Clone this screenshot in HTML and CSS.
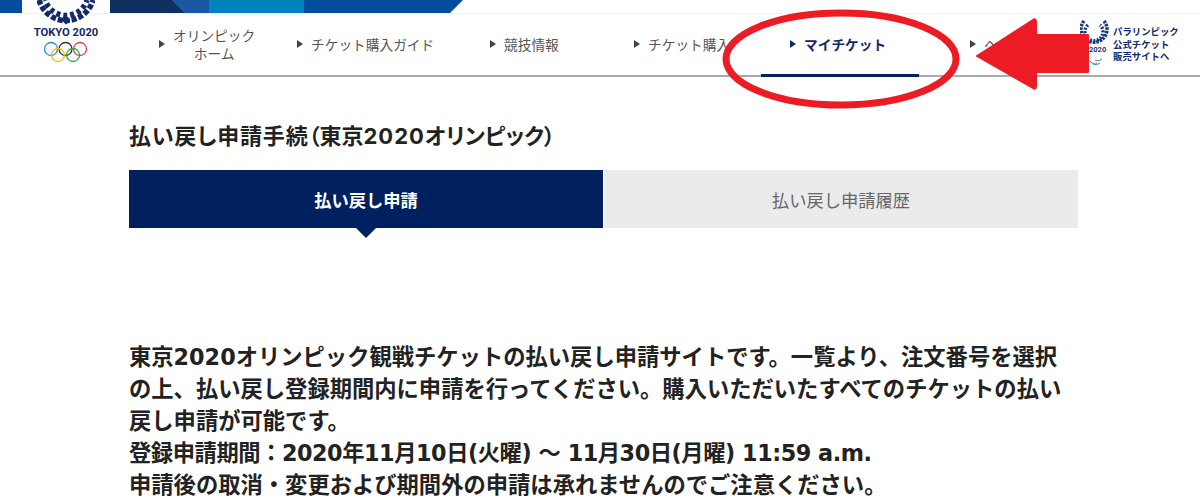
FILE: index.html
```html
<!DOCTYPE html>
<html lang="ja">
<head>
    <title>払い戻し申請手続</title>
    <meta name="viewport" content="width=device-width, initial-scale=1">
    <link rel="stylesheet" href="styles.css">
</head>
<body>
    <!-- Header -->
    <header class="header">
        <div class="topbar">
            <div class="stripe-left"></div>
            <div class="logo-gap"></div>
            <svg class="stripe-art" viewBox="0 0 353 13" preserveAspectRatio="none">
                <rect width="353" height="13" fill="#004d9d"/>
                <rect width="194" height="13" fill="#0082bf"/>
                <polygon points="0,0 62,0 75,13 0,13" fill="#103060"/>
                <polygon points="62,0 99,0 99,13 75,13" fill="#1a58a3"/>
                <polygon points="353,0 353,13 340,13" fill="#fff"/>
            </svg>
        </div>
        <nav class="nav">
            <div class="nav-logo">
                <svg class="emblem" width="58" height="25" viewBox="0 0 58 25">
                    <g fill="none" stroke="#12296b">
                        <path d="M2 0 A28 28 0 0 0 56 0" stroke-width="5.5" stroke-dasharray="5 2"/>
                        <path d="M8 0 A22 22 0 0 0 50 0" stroke-width="5.5" stroke-dasharray="4 3" stroke-dashoffset="3"/>
                    </g>
                    <path d="M24.5 20 L29 15.5 L33.5 20 L29 24.5Z" fill="#12296b"/>
                </svg>
                <div class="logo-text">TOKYO 2020</div>
                <svg class="rings" width="46" height="22" viewBox="0 0 46 22" fill="none" stroke-width="1.3">
                    <circle cx="8" cy="8" r="6.5" stroke="#2b8fd8"/>
                    <circle cx="22.5" cy="8" r="6.5" stroke="#3a2e2a"/>
                    <circle cx="37" cy="8" r="6.5" stroke="#e0405a"/>
                    <circle cx="15" cy="14" r="6.5" stroke="#f5b921"/>
                    <circle cx="30" cy="14" r="6.5" stroke="#2fa552"/>
                </svg>
            </div>
            <ul class="nav-list">
                <li class="nav-item item-home"><span class="arrow"></span><span class="center">オリンピック<br>ホーム</span></li>
                <li class="nav-item item-guide"><span class="arrow"></span><span>チケット購入ガイド</span></li>
                <li class="nav-item item-sport"><span class="arrow"></span><span>競技情報</span></li>
                <li class="nav-item item-buy"><span class="arrow"></span><span>チケット購入</span></li>
                <li class="nav-item item-my active"><span class="arrow"></span><span>マイチケット</span></li>
                <li class="nav-item item-more"><span class="arrow"></span><span>ヘルプ</span></li>
            </ul>
            <div class="para-link">
                <svg class="para-mark" width="30" height="50" viewBox="0 0 30 50">
                    <path d="M4 1 A13 13 0 1 0 24 1" fill="none" stroke="#16387e" stroke-width="3.5" stroke-dasharray="2.5 1"/>
                    <path d="M8 5 A9 9 0 1 0 20 5" fill="none" stroke="#16387e" stroke-width="3.5" stroke-dasharray="2 1.5"/>
                    <text class="para-year" x="9" y="32">2020</text>
                    <path d="M10 41 q4 5 7 2" stroke="#d8433c" fill="none"/>
                    <path d="M13 44 q4 2 7-1" stroke="#2d8fd0" fill="none"/>
                    <path d="M15 40 q4 2 7-1" stroke="#2fa552" fill="none"/>
                </svg>
                <div class="para-text">パラリンピック<br>公式チケット<br>販売サイトへ</div>
            </div>
        </nav>
    </header>

    <!-- Annotations on top of the screenshot -->
    <svg class="marks" width="1200" height="115" viewBox="0 0 1200 115">
        <ellipse cx="841" cy="59" rx="115" ry="46" fill="none" stroke="#ed1c24" stroke-width="7"/>
        <path d="M977 56 L1033 20 Q1036 18 1036 22 V35 H1088 V72 H1036 V86 Q1036 90 1033 88Z" fill="#ed1c24" stroke="#ed1c24" stroke-width="2" stroke-linejoin="round"/>
    </svg>

    <main class="main">
        <h1 class="title"><span class="title-head">払い戻し申請手続</span>（東京<span class="num">2020</span>オリンピック）</h1>
        <div class="tabs">
            <div class="tab tab-on">払い戻し申請</div>
            <div class="tab tab-off">払い戻し申請履歴</div>
        </div>
        <p class="lead">
            東京2020オリンピック観戦チケットの払い戻し申請サイトです。一覧より、注文番号を選択の上、払い戻し登録期間内に申請を行ってください。購入いただいたすべてのチケットの払い戻し申請が可能です。<br>
            <span class="period">登録申請期間：2020年11月10日(火曜) ～ 11月30日(月曜) 11:59 a.m.</span><br>
            申請後の取消・変更および期間外の申請は承れませんのでご注意ください。
        </p>
    </main>
</body>
</html>
```

FILE: styles.css
```css
* { box-sizing: border-box; }
html, body { margin: 0; padding: 0; }
body { font-family: "Noto Sans CJK JP", "Noto Sans", sans-serif; background: #fff; color: #222; overflow: hidden; height: 503px; }

.header { height: 77px; border-bottom: 2px solid #aaa; }
.topbar { display: flex; height: 13px; }
.stripe-left { width: 22px; background: #004d9d; }
.logo-gap { width: 88px; }
.stripe-art { width: 353px; height: 13px; display: block; }

.nav { display: flex; height: 62px; border-top: 1px solid #f2f2f2; }
.nav-logo { width: 132px; display: flex; flex-direction: column; align-items: center; margin-top: -14px; }
.emblem { display: block; }
.logo-text { font-family: "Roboto", sans-serif; font-size: 11.2px; font-weight: 700; color: #12296b; line-height: 13px; margin-top: 1px; white-space: nowrap; }
.rings { margin-top: 2px; }

.nav-list { list-style: none; display: flex; margin: 0; padding: 0; flex: 1; }
.nav-item { display: flex; align-items: center; font-size: 13.7px; line-height: 18px; color: #555; height: 61px; padding-bottom: 2px; white-space: nowrap; }
.arrow { width: 0; height: 0; border-left: 6px solid #444; border-top: 4.5px solid transparent; border-bottom: 4.5px solid transparent; margin-right: 8px; }
.center { text-align: center; }
.item-home { width: 138px; padding-left: 27px; }
.item-guide { width: 193px; padding-left: 27px; }
.item-sport { width: 144px; padding-left: 27px; }
.item-buy { width: 154px; padding-left: 27px; }
.item-my { width: 158px; padding-left: 29px; }
.item-more { width: 161px; padding-left: 51px; }
.active { font-weight: 700; color: #12296b; border-bottom: 3px solid #00205f; height: 63px; padding-bottom: 0; }
.active .arrow { border-left-color: #12296b; }

.para-link { display: flex; width: 120px; }
.para-mark { margin-top: 6px; flex: none; }
.para-year { font-family: "Roboto", sans-serif; font-size: 7.5px; font-weight: 700; fill: #16387e; }
.para-text { font-size: 9.4px; font-weight: 700; line-height: 12.5px; color: #12296b; margin-left: 3px; margin-top: 11px; white-space: nowrap; }

.marks { position: absolute; left: 0; top: 0; }

.main { width: 949px; margin-left: 129px; }
.title { font-size: 22px; line-height: 28px; font-weight: 700; color: #222; margin: 43px 0 20px; font-feature-settings: "palt"; }
.title-head { letter-spacing: .8px; }
.num { font-family: "Inter", sans-serif; letter-spacing: 1px; }
.tabs { display: flex; gap: 1px; height: 58px; }
.tab { flex: 1; display: flex; align-items: center; justify-content: center; font-size: 17.3px; }
.tab-on { background: #002060; color: #fff; font-weight: 700; position: relative; }
.tab-on::after { content: ""; position: absolute; left: 50%; top: 100%; margin-left: -10px; border-left: 10px solid transparent; border-right: 10px solid transparent; border-top: 10px solid #002060; }
.tab-off { background: #ebebeb; color: #666; }

.lead { font-family: "DejaVu Sans", "Noto Sans CJK JP", sans-serif; font-size: 22.3px; line-height: 32px; font-weight: 700; margin: 113px 0 0; color: #222; width: 940px; }
.period { letter-spacing: -.45px; }
```
